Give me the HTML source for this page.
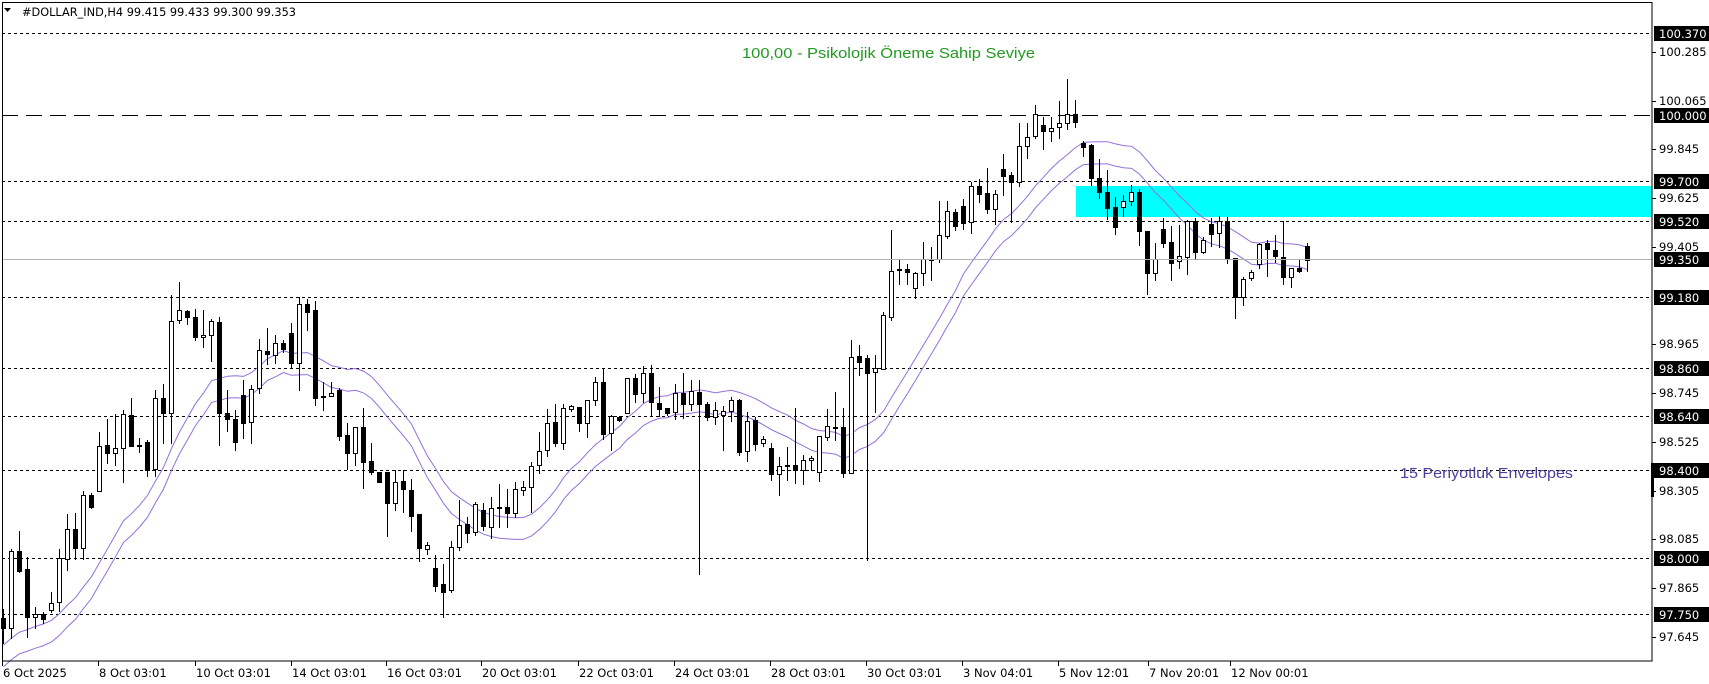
<!DOCTYPE html>
<html><head><meta charset="utf-8">
<style>
html,body{margin:0;padding:0;background:#fff;width:1709px;height:684px;overflow:hidden}
svg{display:block}
text{font-family:"DejaVu Sans","Liberation Sans",sans-serif}
</style></head>
<body>
<svg id="s" width="1709" height="684" xmlns="http://www.w3.org/2000/svg" xml:space="preserve">
<rect x="0" y="0" width="1709" height="684" fill="#fff"/>
<rect x="1076" y="186" width="576" height="31" fill="#00ffff"/>
<g id="lines" stroke="#000" stroke-width="1" shape-rendering="crispEdges"></g>
<g id="env" fill="none" stroke="#9370DB" stroke-width="1"></g>
<g id="candles" shape-rendering="crispEdges"></g>
<line x1="2" y1="259.5" x2="1652" y2="259.5" stroke="#b0b0b0" stroke-width="1" shape-rendering="crispEdges"/>
<rect x="2.5" y="2.5" width="1649.5" height="658.5" fill="none" stroke="#000" stroke-width="1" shape-rendering="crispEdges"/>
<rect x="1651" y="463" width="3" height="34" fill="#000"/>
<g id="axis" font-size="11.5" fill="#000"></g>
<g id="dates" font-size="11.5" fill="#000"></g>
<rect x="3" y="3" width="294" height="17" fill="#fff"/>
<path d="M4 8 L11 8 L7.5 12 Z" fill="#000"/>
<text x="22" y="16" font-size="11.5" textLength="274" lengthAdjust="spacingAndGlyphs">#DOLLAR_IND,H4  99.415 99.433 99.300 99.353</text>
<text x="742" y="58" font-size="14.5" fill="#229a22" style="font-family:'Liberation Sans',sans-serif" textLength="293" lengthAdjust="spacingAndGlyphs">100,00 -  Psikolojik Öneme Sahip Seviye</text>
<text x="1400" y="478" font-size="15" fill="#4b3fa0" style="font-family:'Liberation Sans',sans-serif" textLength="173" lengthAdjust="spacingAndGlyphs">15 Periyotluk Envelopes</text>
</svg>
<script>
var NS="http://www.w3.org/2000/svg";
function el(p,n,a,t){var e=document.createElementNS(NS,n);for(var k in a)e.setAttribute(k,a[k]);if(t!=null)e.textContent=t;p.appendChild(e);return e;}
function Y(p){return 115+(100-p)*221.6;}
var L=document.getElementById('lines');
[100.37,99.7,99.52,99.35,99.18,98.86,98.64,98.4,98.0,97.75].forEach(function(p){
 var y=Math.round(Y(p))+0.5; el(L,'line',{x1:2,y1:y,x2:1652,y2:y,'stroke-dasharray':'3,3'});});
el(L,'line',{x1:2,y1:115.5,x2:1652,y2:115.5,'stroke-dasharray':'16,8'});
var D="618,628,609,643,b;551,628,549,638,w;551,571,531,572,b;569,617,557,637,b;614,617,607,628,w;614,619,612,623,b;603,610,592,612,w;558,602,549,611,w;529,559,514,570,w;529,548,513,559,b;495,548,491,559,w;495,507,493,508,b;446,491,432,491,w;445,453,419,463,b;448,453,414,465,w;414,448,410,482,w;415,446,398,446,b;445,446,438,452,w;442,470,440,476,b;398,469,390,476,w;398,413,384,443,b;321,413,295,443,w;310,320,282,323,w;311,317,310,324,b;317,337,309,340,b;335,337,310,347,w;321,335,319,361,w;322,413,317,445,b;413,419,390,431,b;419,442,410,450,b;395,423,380,438,b;389,422,385,443,w;350,388,339,393,w;351,354,328,364,b;343,355,335,363,w;343,349,340,352,b;333,363,323,368,b;304,363,297,390,w;304,312,299,330,b;310,398,301,405,b;396,397,382,410,b;393,396,382,396,w;390,436,388,440,b;435,453,423,469,b;427,453,427,465,w;427,462,408,488,b;461,472,443,474,b;472,482,472,482,b;472,503,472,536,b;482,503,470,510,w;481,489,470,512,b;490,516,479,531,b;514,548,514,561,b;545,549,542,554,w;568,586,555,591,b;584,592,564,617,b;547,590,541,592,w;525,547,500,550,w;524,533,517,542,b;504,532,502,535,w;510,526,503,530,b;508,527,497,538,w;507,508,484,527,w;507,513,489,527,b;489,513,482,517,w;487,490,481,495,w;466,487,462,512,w;451,465,432,473,w;423,450,409,456,w;422,443,404,446,b;408,443,404,449,w;406,409,405,411,w;407,423,407,431,b;400,423,400,437,w;382,400,377,405,w;382,434,368,439,b;416,433,415,450,w;417,420,416,421,b;378,413,378,413,w;378,394,374,402,b;373,393,366,402,w;373,402,365,416,b;403,409,387,416,b;408,413,408,415,b;393,412,384,419,w;393,404,373,418,b;391,404,380,410,w;392,404,380,574,b;404,417,402,420,b;410,417,402,424,w;411,415,406,450,w;400,411,397,421,w;400,452,399,455,b;421,451,412,461,w;420,444,417,450,b;439,443,436,446,w;448,474,443,480,b;466,474,457,495,w;465,466,447,480,w;465,470,408,483,b;460,470,455,484,w;458,460,456,470,w;436,472,436,481,w;426,437,409,440,w;427,428,392,440,w;427,473,408,477,b;357,473,340,473,w;356,362,345,375,b;358,373,355,560,b;368,372,355,412,w;315,369,312,369,w;271,317,230,320,w;269,270,260,284,b;269,272,264,284,b;273,288,272,298,w;259,273,242,285,w;259,260,247,280,w;235,259,201,262,w;211,236,201,238,w;212,226,209,230,b;206,223,199,229,b;186,222,182,233,w;186,194,179,202,b;193,209,168,213,b;194,209,190,224,w;169,176,154,195,b;175,182,172,222,b;146,182,123,186,w;137,146,123,158,w;114,136,105,138,w;125,131,117,149,b;128,131,117,141,w;123,127,101,138,w;114,123,79,129,w;114,122,100,127,b;143,147,141,156,b;145,178,144,185,b;178,192,159,198,b;192,208,170,219,b;207,227,197,234,b;201,207,195,216,w;192,201,185,205,w;192,231,189,245,b;231,273,231,294,b;259,273,243,280,w;229,243,218,247,b;242,263,226,280,b;256,261,225,268,w;221,257,220,274,w;221,252,218,258,b;240,252,237,253,w;224,234,218,246,b;221,233,216,247,w;221,258,217,263,b;258,297,258,318,b;279,297,277,305,w;272,278,270,280,w;244,264,243,268,w;243,249,240,276,b;250,256,235,262,b;257,277,221,284,b;268,277,268,287,w;268,271,260,272,b;246,260,243,271,b";
var C=document.getElementById('candles');
var rows=D.split(';'),closes=[];
for(var i=0;i<14;i++)closes.push(Y(97.55));
rows.forEach(function(r,i){
 var a=r.split(','),t=+a[0],b=+a[1],h=+a[2],l=+a[3],c=a[4];
 var x=3+8*i;
 closes.push(c=='w'?t:b);
 el(C,'line',{x1:x+0.5,y1:h,x2:x+0.5,y2:l+1,stroke:'#000','stroke-width':1});
 if(b-t<1.5){el(C,'rect',{x:x-2,y:t,width:5,height:2,fill:'#000'});}
 else if(c=='w'){el(C,'rect',{x:x-1.5,y:t+0.5,width:4,height:b-t,fill:'#fff',stroke:'#000','stroke-width':1});}
 else{el(C,'rect',{x:x-2,y:t,width:5,height:b-t+1,fill:'#000'});}
});
function P(y){return 100-(y-115)/221.6;}
var up=[],dn=[];
for(var i=0;i<rows.length;i++){
 var s=0;for(var k=0;k<15;k++)s+=P(closes[i+14-k]);var m=s/15;
 var x=3+8*i+0.5;
 up.push(x+','+Y(m*1.0005).toFixed(1));dn.push(x+','+Y(m*0.9995).toFixed(1));
}
var E=document.getElementById('env');
el(E,'polyline',{points:up.join(' ')});el(E,'polyline',{points:dn.join(' ')});
var A=document.getElementById('axis');
[100.285,100.065,99.845,99.625,99.405,98.965,98.745,98.525,98.305,98.085,97.865,97.645].forEach(function(p){
 var y=Math.round(Y(p));el(A,'line',{x1:1652,y1:y+0.5,x2:1656,y2:y+0.5,stroke:'#000'});
 el(A,'text',{x:1659,y:y+4},p.toFixed(3));});
[100.37,100.0,99.7,99.52,99.35,99.18,98.86,98.64,98.4,98.0,97.75].forEach(function(p){
 var y=Math.round(Y(p));el(A,'rect',{x:1654,y:y-7,width:55,height:15,fill:'#000'});
 el(A,'text',{x:1659,y:y+5,fill:'#fff'},p.toFixed(3));});
var T=document.getElementById('dates');
[[2,'6 Oct 2025'],[98,'8 Oct 03:01'],[195,'10 Oct 03:01'],[291,'14 Oct 03:01'],[386,'16 Oct 03:01'],[481,'20 Oct 03:01'],[578,'22 Oct 03:01'],[674,'24 Oct 03:01'],[770,'28 Oct 03:01'],[866,'30 Oct 03:01'],[962,'3 Nov 04:01'],[1058,'5 Nov 12:01'],[1148,'7 Nov 20:01'],[1230,'12 Nov 00:01']].forEach(function(d){
 el(T,'line',{x1:d[0]+0.5,y1:661,x2:d[0]+0.5,y2:666,stroke:'#000'});
 el(T,'text',{x:d[0]+1,y:677},d[1]);});
</script>
</body></html>
